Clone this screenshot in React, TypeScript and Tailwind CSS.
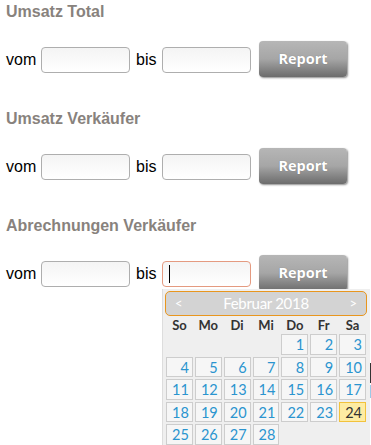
import React from "react";

const headingCls =
  "h-[20px] leading-[20px] text-[16px] font-bold text-[#88827d] [font-family:'Liberation_Sans',Arial,sans-serif]";

function Row({ focused }: { focused?: boolean }) {
  const inputBase =
    "w-[89px] h-[26px] rounded-[4px] border bg-gradient-to-b from-[#f4f4f4] to-[#ffffff]";
  return (
    <div className="flex items-center h-[37px] mt-[19px] text-[16px] text-black [font-family:'Liberation_Sans',Arial,sans-serif]">
      <span className="w-[30px]">vom</span>
      <div className={`${inputBase} ml-[5px] border-[#aeaeae]`} />
      <span className="ml-[6px] w-[20px]">bis</span>
      <div
        className={`${inputBase} ml-[6px] relative ${
          focused ? "border-[#e49a80]" : "border-[#aeaeae]"
        }`}
      >
        {focused && (
          <div className="absolute left-[6px] top-[3px] w-[1px] h-[18px] bg-black" />
        )}
      </div>
      <div className="ml-[8px] w-[89px] h-[37px] relative">
        <div className="absolute left-0 top-0 w-[88px] h-[36px] rounded-[4px] bg-gradient-to-b from-[#b6b6b6] via-[#a6a6a6] to-[#6c6c6c] shadow-[1px_1px_2px_rgba(0,0,0,0.45)] flex items-center justify-center">
          <span className="text-white font-bold text-[14.5px] [font-family:'Open_Sans',sans-serif] [text-shadow:0_0_1px_rgba(0,0,0,0.3)] -mt-[1px]">
            Report
          </span>
        </div>
      </div>
    </div>
  );
}

const days: (number | null)[] = [
  null, null, null, null, 1, 2, 3,
  4, 5, 6, 7, 8, 9, 10,
  11, 12, 13, 14, 15, 16, 17,
  18, 19, 20, 21, 22, 23, 24,
  25, 26, 27, 28, null, null, null,
];

function Calendar() {
  return (
    <div className="absolute left-[162px] top-[289px] w-[208px] h-[160px] bg-[#efefef] border-l border-[#dddddd] [font-family:Lato,sans-serif]">
      <div className="ml-[2px] mt-[2px] w-[202px] h-[25px] rounded-[5px] border border-[#e8961e] bg-[#d3d3d3] flex items-center justify-between px-[9px] text-white">
        <span className="text-[13px]">&lt;</span>
        <span className="text-[15px] tracking-[-0.3px]">Februar 2018</span>
        <span className="text-[13px]">&gt;</span>
      </div>
      <div className="ml-[3px] w-[200px] grid grid-cols-7 gap-x-[2px] h-[16px] mt-[1px]">
        {["So", "Mo", "Di", "Mi", "Do", "Fr", "Sa"].map((d) => (
          <div
            key={d}
            className="text-center text-[13px] font-bold text-[#333333] leading-[16px]"
          >
            {d}
          </div>
        ))}
      </div>
      <div className="ml-[3px] mt-[1px] w-[200px] grid grid-cols-7 gap-x-[2px] gap-y-[2px]">
        {days.map((d, i) =>
          d === null ? (
            <div key={i} className="h-[20.5px]" />
          ) : d === 24 ? (
            <div
              key={i}
              className="h-[20.5px] border border-[#f2c23c] bg-[#feeca3] text-right pr-[3px] text-[14.5px] leading-[19px] text-[#333333]"
            >
              {d}
            </div>
          ) : (
            <div
              key={i}
              className="h-[20.5px] border border-[#cdcdcd] bg-[#f6f6f6] text-right pr-[3px] text-[14.5px] leading-[19px] text-[#2a94cf]"
            >
              {d}
            </div>
          )
        )}
      </div>
    </div>
  );
}

export default function App() {
  return (
    <div className="relative w-[371px] h-[445px] overflow-hidden bg-white pl-[6px]">
      <div className="pt-[2px]">
        <div className={headingCls}>Umsatz Total</div>
        <Row />
      </div>
      <div className="mt-[31px]">
        <div className={headingCls}>Umsatz Verkäufer</div>
        <Row />
      </div>
      <div className="mt-[31px]">
        <div className={headingCls}>Abrechnungen Verkäufer</div>
        <Row focused />
      </div>
      <div className="absolute left-[369px] top-[363px] w-[2px] h-[20px] bg-[#333333]" />
      <div className="absolute left-[369px] top-[385px] w-[2px] h-[13px] bg-[#9cc9e6]" />
      <Calendar />
    </div>
  );
}
